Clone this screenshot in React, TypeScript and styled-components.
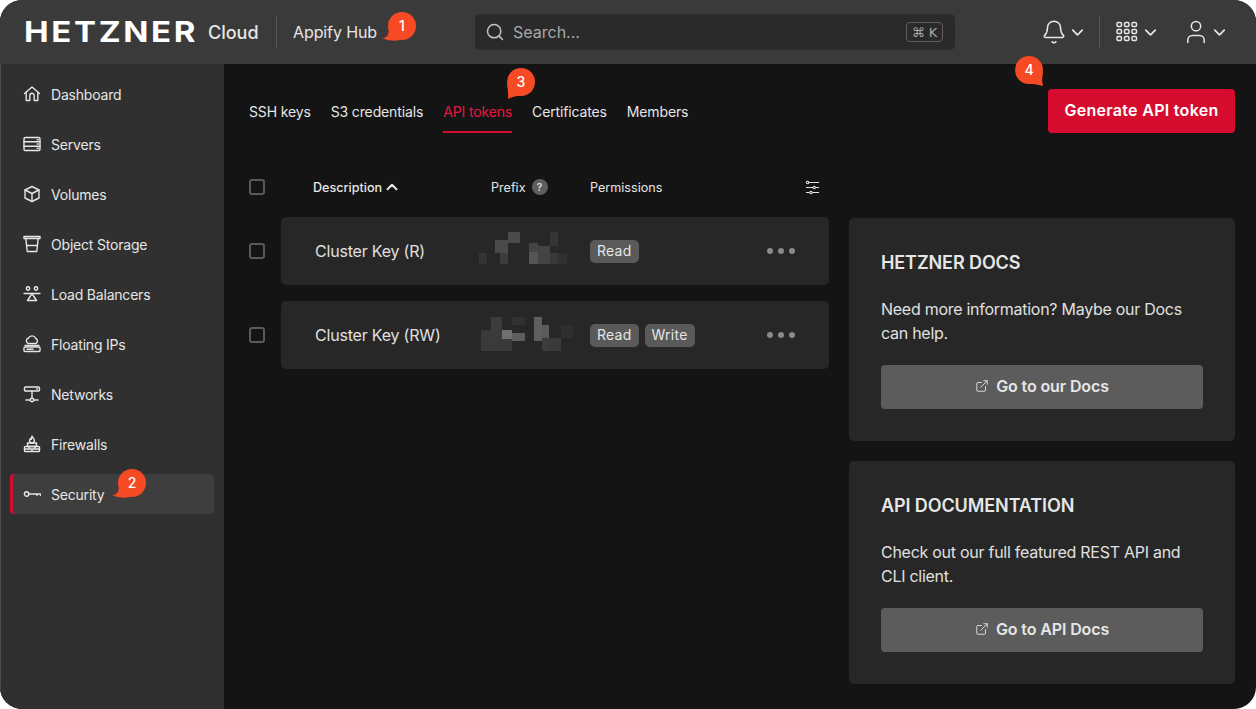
import React from "react";
import styled, { createGlobalStyle } from "styled-components";
import { ChevronDown, ChevronUp, Search, Bell, User, ExternalLink } from "lucide-react";

const Global = createGlobalStyle`
  html, body { margin: 0; padding: 0; background: #fff; width: 1256px; height: 709px; overflow: hidden; }
  * { box-sizing: border-box; }
  body { font-family: Inter, "Liberation Sans", sans-serif; }
`;

const Frame = styled.div`
  width: 1256px; height: 709px; border-radius: 22px; overflow: hidden; position: relative;
  background: #141414; display: flex; flex-direction: column; color: #e6e6e6;
`;
const Header = styled.header`
  height: 64px; flex: none; background: #3a3a3a; display: flex; align-items: center;
  padding-left: 24px;
`;
const Wordmark = styled.div`
  width: 172px; font-size: 29px; line-height: 22px; height: 22px; font-weight: 700; color: #fff;
  letter-spacing: 2.3px; transform: scaleX(1.14); transform-origin: left center; white-space: nowrap;
`;
const CloudText = styled.span`
  margin-left: 12px; font-size: 18px; font-weight: 500; color: #e6e6e6; width: 68px;
`;
const VRule = styled.div`
  width: 1px; height: 32px; background: #555; flex: none;
`;
const HubText = styled.span`
  margin-left: 16px; width: 182px; font-size: 16px; color: #e6e6e6; white-space: nowrap; letter-spacing: -0.1px;
`;
const SearchBox = styled.div`
  width: 480px; height: 36px; background: #2a2a2a; border-radius: 5px; display: flex; align-items: center;
  padding: 0 12px 0 10px; gap: 8px; color: #a8a8a8; font-size: 16px; flex: none;
`;
const SearchLabel = styled.span`
  flex: 1;
`;
const Kbd = styled.span`
  height: 20px; width: 37px; border: 1px solid #5e5e5e; border-radius: 4px; display: flex; align-items: center;
  justify-content: center; gap: 3px; font-size: 13px; color: #a8a8a8; font-family: "DejaVu Sans", Inter, sans-serif;
`;
const HeaderIcons = styled.div`
  margin-left: 86px; display: flex; align-items: center; color: #e6e6e6;
`;
const IconGroup = styled.div<{ $w: number; $gap: number; $pad?: number }>`
  display: flex; align-items: center; gap: ${p => p.$gap}px; width: ${p => p.$w}px;
  padding-left: ${p => p.$pad ?? 0}px;
`;
const Body = styled.div`
  flex: 1; display: flex; min-height: 0;
`;
const Sidebar = styled.nav`
  width: 224px; flex: none; background: #303030; padding: 10px 10px 0; display: flex; flex-direction: column; gap: 10px;
  box-shadow: inset 1px 0 0 #4c4c4c;
`;
const NavItem = styled.div<{ $active?: boolean }>`
  height: 40px; border-radius: 4px; display: flex; align-items: center; gap: 10px; padding-left: 13px;
  font-size: 14px; color: #e6e6e6; letter-spacing: -0.2px;
  width: 204px;
  background: ${p => (p.$active ? "#3e3e3e" : "transparent")};
  box-shadow: ${p => (p.$active ? "inset 3px 0 0 #d50c2d" : "none")};
`;
const NavIcon = styled.svg`
  width: 18px; height: 18px; flex: none; fill: none; stroke: #e6e6e6; stroke-width: 1.4;
  stroke-linecap: round; stroke-linejoin: round;
`;
const Main = styled.main`
  flex: 1; padding: 25px 21px 0 25px; min-width: 0;
`;
const TopRow = styled.div`
  display: flex; justify-content: space-between; align-items: flex-start; height: 44px;
`;
const Tabs = styled.div`
  display: flex; gap: 20px; height: 44px;
`;
const Tab = styled.div<{ $active?: boolean }>`
  height: 44px; padding-top: 14px; font-size: 14px; line-height: 18px; white-space: nowrap; letter-spacing: -0.14px;
  color: ${p => (p.$active ? "#e8163f" : "#e6e6e6")};
  border-bottom: 2px solid ${p => (p.$active ? "#d50c2d" : "transparent")};
`;
const PrimaryButton = styled.button`
  width: 187px; height: 44px; border: 0; border-radius: 4px; background: #d50c2d; color: #fff;
  font: 600 16px Inter, sans-serif; padding: 0 0 2px; letter-spacing: 0.3px;
`;
const Columns = styled.div`
  display: flex; gap: 20px; margin-top: 28px;
`;
const TableCol = styled.div`
  width: 580px; flex: none;
`;
const HeadRow = styled.div`
  height: 56px; display: grid; grid-template-columns: 64px 178px 99px 1fr 24px; align-items: center;
  font-size: 12.6px; color: #e6e6e6; padding-bottom: 4px;
`;
const HeadCell = styled.div<{ $strong?: boolean }>`
  display: flex; align-items: center; gap: 6px; white-space: nowrap;
  font-weight: ${p => (p.$strong ? 500 : 400)};
`;
const HelpDot = styled.span`
  width: 16px; height: 16px; border-radius: 50%; background: #5e5e5e; color: #e0e0e0; font-size: 10px;
  display: flex; align-items: center; justify-content: center; font-weight: 600;
`;
const Check = styled.span`
  width: 16px; height: 16px; border: 2px solid #5a5a5a; border-radius: 3px; display: block; flex: none;
`;
const Row = styled.div`
  display: grid; grid-template-columns: 32px 548px; align-items: center; margin-bottom: 16px;
`;
const RowCard = styled.div`
  height: 68px; background: #272727; border-radius: 5px; display: grid; grid-template-columns: 155px 120px 177px 1fr;
  align-items: center; padding-left: 34px;
`;
const KeyName = styled.div`
  font-size: 16px; color: #e0e0e0; white-space: nowrap; letter-spacing: -0.2px;
`;
const Mosaic = styled.svg`
  width: 110px; height: 68px; display: block;
`;
const Tags = styled.div`
  display: flex; gap: 6px;
`;
const Tag = styled.span`
  height: 23px; border-radius: 5px; background: #5a5a5a; color: #e6e6e6; font-size: 14px; line-height: 22px;
  padding: 0 7px; letter-spacing: 0.25px;
`;
const Dots = styled.div`
  display: flex; gap: 5px;
`;
const Dot = styled.i`
  width: 6px; height: 6px; border-radius: 50%; background: #8a8a8a; display: block;
`;
const Side = styled.div`
  width: 386px; flex: none; display: flex; flex-direction: column; gap: 20px; margin-top: 57px;
`;
const Card = styled.section`
  height: 223px; background: #272727; border-radius: 5px; padding: 33px 32px 0;
`;
const CardTitle = styled.h2`
  margin: 0; font-size: 18px; line-height: 24px; font-weight: 600; color: #e6e6e6; letter-spacing: -0.1px;
`;
const CardText = styled.p`
  margin: 22px 0 0; font-size: 16px; line-height: 24px; color: #e0e0e0; width: 322px; letter-spacing: -0.27px;
`;
const GreyButton = styled.button`
  width: 322px; height: 44px; margin-top: 20px; border: 0; border-radius: 4px; background: #5c5c5c; color: #e6e6e6;
  font: 600 16px Inter, sans-serif; display: flex; align-items: center; justify-content: center; gap: 7px; padding: 0 0 2px;
  letter-spacing: -0.12px;
`;
const Pin = styled.div<{ $x: number; $y: number }>`
  position: absolute; left: ${p => p.$x}px; top: ${p => p.$y}px; width: 28px; height: 28px;
  color: #fff; font-size: 14px; font-weight: 500;
  display: flex; align-items: center; justify-content: center;
`;
const PinShape = styled.svg`
  position: absolute; left: -6px; top: 0; width: 40px; height: 34px; fill: #f64a24;
`;
const PinNumber = styled.span`
  position: relative; margin-top: -1px;
`;

type Tail = "left" | "down" | "right";
const tails: Record<Tail, string> = {
  left: "M7 18 Q6 27 0 26 Q8 30 18 28 Z",
  down: "M6 16 Q7.5 25 7 31 Q12 28 20 27.5 Z",
  right: "M34 16 Q32.5 25 34 30 Q28 28 20 27.5 Z",
};

const PinAt = ({ n, x, y, tail }: { n: number; x: number; y: number; tail: Tail }) => (
  <Pin $x={x} $y={y}>
    <PinShape viewBox="0 0 40 34">
      <circle cx="20" cy="14" r="14" />
      <path d={tails[tail]} />
    </PinShape>
    <PinNumber>{n}</PinNumber>
  </Pin>
);

type R = [number, number, number, number, string];
const rects1: R[] = [
  [9, 36, 8, 11, "#333"], [25, 23, 13, 13, "#4a4a4a"], [38, 15, 12, 11, "#4a4a4a"], [30, 36, 8, 11, "#3d3d3d"],
  [59, 26, 9, 9, "#444"], [59, 35, 9, 12, "#555"], [68, 29, 12, 18, "#444"], [80, 15, 8, 14, "#353535"],
  [80, 36, 8, 11, "#383838"], [88, 36, 9, 11, "#303030"],
];
const rects2: R[] = [
  [11, 29, 21, 21, "#3a3a3a"], [21, 16, 11, 13, "#3c3c3c"], [32, 38, 10, 12, "#3a3a3a"], [32, 29, 10, 9, "#707070"],
  [42, 32, 13, 8, "#5e5e5e"], [42, 16, 13, 8, "#303030"], [64, 16, 8, 24, "#5f5f5f"], [72, 24, 7, 16, "#5a5a5a"],
  [72, 37, 7, 13, "#3c3c3c"], [79, 37, 12, 13, "#3a3a3a"], [91, 24, 12, 13, "#2f2f2f"],
];

const Pixels = ({ rects }: { rects: R[] }) => (
  <Mosaic viewBox="0 0 110 68">
    {rects.map((r, i) => <rect key={i} x={r[0]} y={r[1]} width={r[2]} height={r[3]} fill={r[4]} />)}
  </Mosaic>
);

const Grid9 = () => (
  <svg width="22" height="22" viewBox="0 0 22 22" fill="none" stroke="#e6e6e6" strokeWidth="1.5">
    {[0, 1, 2].flatMap(r => [0, 1, 2].map(c => (
      <rect key={`${r}${c}`} x={1 + c * 7.5} y={1.5 + r * 7} width="4.5" height="4" rx="1.2" />
    )))}
  </svg>
);

const Sliders = () => (
  <svg width="15" height="15" viewBox="0 0 15 15" fill="none" stroke="#e6e6e6" strokeWidth="1.1">
    <path d="M3.8 2.5H14M1 2.5h.4M1 7.5h7M10.4 7.5H14M1 12.5h3.8M7.2 12.5H14" />
    <circle cx="2.6" cy="2.5" r="1.2" />
    <circle cx="9.2" cy="7.5" r="1.2" />
    <circle cx="6" cy="12.5" r="1.2" />
  </svg>
);

const navIcons: Record<string, React.ReactNode> = {
  Dashboard: <><path d="M1.5 8.5 9 2l7.5 6.5" /><path d="M3.2 7.2V15.5h3.6V10.5a2.2 2.2 0 0 1 4.4 0v5h3.6V7.2" /></>,
  Servers: <><rect x="1" y="2.5" width="16" height="13" rx="1.2" /><path d="M1 6.8h16M1 11.2h16" /><path d="M14.2 4.7h1M14.2 9h1M14.2 13.3h1" /></>,
  Volumes: <><path d="M9 1.5 16 5v8l-7 3.5L2 13V5z" /><path d="M2 5l7 3.5L16 5M9 8.5v8" /></>,
  "Object Storage": <><path d="M1 1.5h16v2H1z" /><path d="M2.8 3.5 4.3 16.5h9.4L15.2 3.5" /><path d="M3.6 10.5h10.8" /></>,
  "Load Balancers": <><circle cx="5" cy="3.5" r="1.7" /><circle cx="13" cy="3.5" r="1.7" /><path d="M1 8.5h16" /><path d="M9 8.5l-4.5 7h9z" /></>,
  "Floating IPs": <><path d="M5 8.5a3 3 0 0 1 .5-5.5 4 4 0 0 1 7.3.5A2.8 2.8 0 0 1 13 8.5z" /><path d="M2 10.5h14" /><rect x="1" y="12" width="16" height="4.5" rx="1" /><path d="M4 14.2h6" /></>,
  Networks: <><rect x="1.5" y="2" width="15" height="4" rx="1" /><path d="M9 6v7.5M3 15h4M11 15h4" /><circle cx="9" cy="15" r="1.7" /><path d="M13.5 4h1" /></>,
  Firewalls: <><path d="M9 1c.4 1.7 2.4 2.5 2.4 4.6a2.4 2.4 0 0 1-4.8 0c0-1 .5-1.6.9-2.1.2.5.6.8 1 .9C8.4 3.2 8.4 2 9 1z" /><path d="M4.5 8h9v3.5h-9z" /><rect x="1.5" y="11.5" width="15" height="5" rx=".8" /><path d="M6 11.5v2.5H1.5M12 11.5v2.5h4.5M9 14v2.5M6 14h6" /></>,
  Security: <><circle cx="3.6" cy="9" r="2.2" /><path d="M5.8 9h11.7M14 9v1.6M17.4 9v1.2" /></>,
};

const navNames = ["Dashboard", "Servers", "Volumes", "Object Storage", "Load Balancers", "Floating IPs", "Networks", "Firewalls", "Security"];

export default function App() {
  return (
    <Frame>
      <Global />
      <Header>
        <Wordmark>HETZNER</Wordmark>
        <CloudText>Cloud</CloudText>
        <VRule />
        <HubText>Appify Hub</HubText>
        <SearchBox>
          <Search size={20} color="#c4c4c4" strokeWidth={1.8} />
          <SearchLabel>Search...</SearchLabel>
          <Kbd>⌘ K</Kbd>
        </SearchBox>
        <HeaderIcons>
          <IconGroup $w={58} $gap={1}>
            <Bell size={26} strokeWidth={1.4} />
            <ChevronDown size={19} strokeWidth={2.2} />
          </IconGroup>
          <VRule />
          <IconGroup $w={82} $gap={3} $pad={16}>
            <Grid9 />
            <ChevronDown size={19} strokeWidth={2.2} />
          </IconGroup>
          <IconGroup $w={50} $gap={-1}>
            <User size={28} strokeWidth={1.3} />
            <ChevronDown size={19} strokeWidth={2.2} />
          </IconGroup>
        </HeaderIcons>
      </Header>
      <Body>
        <Sidebar>
          {navNames.map(n => (
            <NavItem key={n} $active={n === "Security"}>
              <NavIcon viewBox="0 0 18 18">{navIcons[n]}</NavIcon>
              {n}
            </NavItem>
          ))}
        </Sidebar>
        <Main>
          <TopRow>
            <Tabs>
              <Tab>SSH keys</Tab>
              <Tab>S3 credentials</Tab>
              <Tab $active>API tokens</Tab>
              <Tab>Certificates</Tab>
              <Tab>Members</Tab>
            </Tabs>
            <PrimaryButton>Generate API token</PrimaryButton>
          </TopRow>
          <Columns>
            <TableCol>
              <HeadRow>
                <Check />
                <HeadCell $strong>Description <ChevronUp size={18} strokeWidth={2.6} style={{ marginLeft: -5 }} /></HeadCell>
                <HeadCell>Prefix <HelpDot>?</HelpDot></HeadCell>
                <HeadCell>Permissions</HeadCell>
                <Sliders />
              </HeadRow>
              <Row>
                <Check />
                <RowCard>
                  <KeyName>Cluster Key (R)</KeyName>
                  <Pixels rects={rects1} />
                  <Tags><Tag>Read</Tag></Tags>
                  <Dots><Dot /><Dot /><Dot /></Dots>
                </RowCard>
              </Row>
              <Row>
                <Check />
                <RowCard>
                  <KeyName>Cluster Key (RW)</KeyName>
                  <Pixels rects={rects2} />
                  <Tags><Tag>Read</Tag><Tag>Write</Tag></Tags>
                  <Dots><Dot /><Dot /><Dot /></Dots>
                </RowCard>
              </Row>
            </TableCol>
            <Side>
              <Card>
                <CardTitle>HETZNER DOCS</CardTitle>
                <CardText>Need more information? Maybe our Docs can help.</CardText>
                <GreyButton><ExternalLink size={14} strokeWidth={1.5} />Go to our Docs</GreyButton>
              </Card>
              <Card>
                <CardTitle>API DOCUMENTATION</CardTitle>
                <CardText>Check out our full featured REST API and CLI client.</CardText>
                <GreyButton><ExternalLink size={14} strokeWidth={1.5} />Go to API Docs</GreyButton>
              </Card>
            </Side>
          </Columns>
        </Main>
      </Body>
      <PinAt n={1} x={388} y={12} tail="left" />
      <PinAt n={2} x={118} y={469} tail="left" />
      <PinAt n={3} x={507} y={68} tail="down" />
      <PinAt n={4} x={1015} y={56} tail="right" />
    </Frame>
  );
}
